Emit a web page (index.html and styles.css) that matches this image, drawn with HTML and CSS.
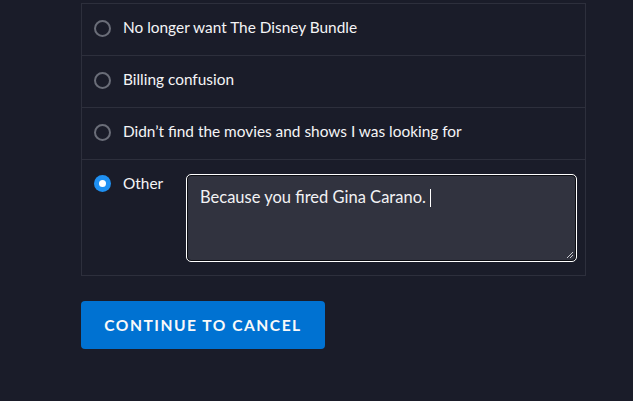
FILE: index.html
```html
<!DOCTYPE html>
<html>
<head>
<meta charset="utf-8">
<link rel="stylesheet" href="styles.css">
</head>
<body>
<main class="page">
  <div class="options">
    <div class="option">
      <span class="radio"></span>
      <span class="label">No longer want The Disney Bundle</span>
    </div>
    <div class="option">
      <span class="radio"></span>
      <span class="label">Billing confusion</span>
    </div>
    <div class="option">
      <span class="radio"></span>
      <span class="label">Didn’t find the movies and shows I was looking for</span>
    </div>
    <div class="option option-other">
      <span class="radio radio-checked"></span>
      <span class="label label-other">Other</span>
      <div class="textbox">
        <span class="typed">Because you fired Gina Carano.</span><span class="caret"></span>
        <svg class="grip" width="9" height="9" viewBox="0 0 9 9"><path d="M8 2 L2 8 M8 5 L5 8" stroke="#c9cad0" stroke-width="1"/></svg>
      </div>
    </div>
  </div>
  <button class="continue">CONTINUE TO CANCEL</button>
</main>
</body>
</html>
```

FILE: styles.css
```css
html, body {
  margin: 0;
  padding: 0;
  background: #1a1c29;
}
body {
  font-family: Lato, "Open Sans", "Liberation Sans", sans-serif;
  color: #f4f4f6;
}
.page {
  padding: 3px 0 0 81px;
}
.options {
  width: 503px;
  border: 1px solid #2d2f3c;
}
.option {
  display: flex;
  align-items: center;
  padding: 15px 12px 17px;
  border-bottom: 1px solid #2d2f3c;
  line-height: 19px;
  font-size: 15.4px;
}
.option:last-child {
  border-bottom: none;
}
.label {
  position: relative;
  top: -1px;
}
.radio {
  box-sizing: border-box;
  width: 17px;
  height: 17px;
  border-radius: 50%;
  border: 2px solid #6a6d78;
  flex: none;
  margin-right: 12px;
}
.radio-checked {
  background: #1f90f2;
  border: none;
  position: relative;
}
.radio-checked::after {
  content: "";
  position: absolute;
  left: 5px;
  top: 5px;
  width: 7px;
  height: 7px;
  border-radius: 50%;
  background: #fff;
}
.option-other {
  align-items: flex-start;
  padding-bottom: 14px;
}
.label-other {
  width: 64px;
  flex: none;
}
.textbox {
  position: relative;
  flex: none;
  margin-top: 0;
  box-sizing: border-box;
  width: 389px;
  height: 86px;
  background: #31333f;
  border: 1px solid #0c0d12;
  outline: 1px solid #ffffff;
  border-radius: 4px;
  padding: 11px 12px;
  font-size: 16.5px;
  line-height: 20px;
  color: #f2f2f4;
}
.caret {
  display: inline-block;
  width: 1px;
  height: 18px;
  background: #fff;
  vertical-align: -4px;
  margin-left: 4px;
}
.grip {
  position: absolute;
  right: 1px;
  bottom: 1px;
}
.continue {
  margin-top: 25px;
  width: 244px;
  height: 48px;
  border: none;
  border-radius: 4px;
  background: #0072d2;
  color: #f9f9f9;
  font-family: Lato, "Open Sans", "Liberation Sans", sans-serif;
  font-weight: 700;
  font-size: 15.6px;
  letter-spacing: 1.5px;
  padding: 0;
}
```
